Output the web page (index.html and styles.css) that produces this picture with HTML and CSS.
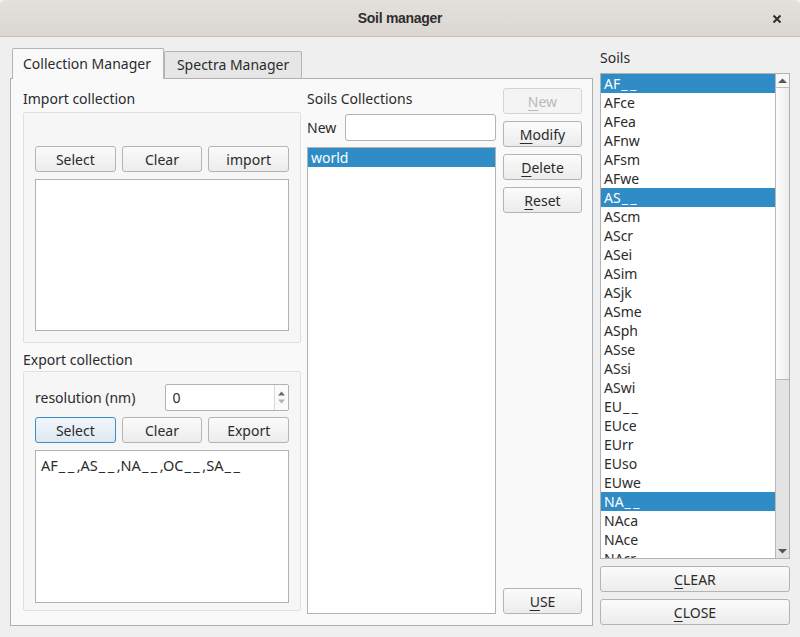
FILE: index.html
```html
<!DOCTYPE html>
<html>
<head>
<meta charset="utf-8">
<link rel="stylesheet" href="styles.css">
</head>
<body>
<div class="window">
  <div class="titlebar">
    <span class="title">Soil manager</span>
    <svg class="close" width="10" height="10" viewBox="0 0 10 10"><path d="M1.5 1.5 L8.5 8.5 M8.5 1.5 L1.5 8.5" stroke="#2e2e2e" stroke-width="2" fill="none"/></svg>
  </div>
  <div class="content">
    <div class="tabwidget">
      <div class="tabs">
        <div class="tab active">Collection Manager</div>
        <div class="tab">Spectra Manager</div>
      </div>
      <div class="pane">
        <div class="col-left">
          <div class="label">Import collection</div>
          <div class="group group-import">
            <div class="btnrow">
              <div class="btn">Select</div>
              <div class="btn">Clear</div>
              <div class="btn">import</div>
            </div>
            <div class="box box-import"></div>
          </div>
          <div class="label label-export">Export collection</div>
          <div class="group group-export">
            <div class="spinrow">
              <span class="spinlabel">resolution (nm)</span>
              <div class="spin">
                <span class="spinval">0</span>
                <div class="spinbtns">
                  <svg width="7" height="5" viewBox="0 0 7 5"><path d="M0 4.5 L3.5 0.5 L7 4.5 Z" fill="#6a6a6a"/></svg>
                  <svg width="7" height="5" viewBox="0 0 7 5"><path d="M0 0.5 L3.5 4.5 L7 0.5 Z" fill="#b0b0b0"/></svg>
                </div>
              </div>
            </div>
            <div class="btnrow">
              <div class="btn focus">Select</div>
              <div class="btn">Clear</div>
              <div class="btn">Export</div>
            </div>
            <div class="box box-export">AF<span class="us">__</span>,AS<span class="us">__</span>,NA<span class="us">__</span>,OC<span class="us">__</span>,SA<span class="us">__</span></div>
          </div>
        </div>
        <div class="col-mid">
          <div class="label">Soils Collections</div>
          <div class="newrow">
            <span class="newlabel">New</span>
            <div class="input"></div>
          </div>
          <div class="list list-coll">
            <div class="row sel">world</div>
          </div>
        </div>
        <div class="col-btns">
          <div class="btn disabled"><u>N</u>ew</div>
          <div class="btn"><u>M</u>odify</div>
          <div class="btn"><u>D</u>elete</div>
          <div class="btn"><u>R</u>eset</div>
          <div class="spacer"></div>
          <div class="btn"><u>U</u>SE</div>
        </div>
      </div>
    </div>
    <div class="col-right">
      <div class="label soils-label">Soils</div>
      <div class="soilslist">
        <div class="rows">
          <div class="row sel">AF<span class="us">__</span></div>
          <div class="row">AFce</div>
          <div class="row">AFea</div>
          <div class="row">AFnw</div>
          <div class="row">AFsm</div>
          <div class="row">AFwe</div>
          <div class="row sel">AS<span class="us">__</span></div>
          <div class="row">AScm</div>
          <div class="row">AScr</div>
          <div class="row">ASei</div>
          <div class="row">ASim</div>
          <div class="row">ASjk</div>
          <div class="row">ASme</div>
          <div class="row">ASph</div>
          <div class="row">ASse</div>
          <div class="row">ASsi</div>
          <div class="row">ASwi</div>
          <div class="row">EU<span class="us">__</span></div>
          <div class="row">EUce</div>
          <div class="row">EUrr</div>
          <div class="row">EUso</div>
          <div class="row">EUwe</div>
          <div class="row sel">NA<span class="us">__</span></div>
          <div class="row">NAca</div>
          <div class="row">NAce</div>
          <div class="row">NAcr</div>
        </div>
        <div class="scrollbar">
          <div class="sb-arrow up"><svg width="9" height="5" viewBox="0 0 9 5"><path d="M0 5 L4.5 0.5 L9 5 Z" fill="#555"/></svg></div>
          <div class="sb-thumb"></div>
          <div class="sb-track"></div>
          <div class="sb-arrow down"><svg width="9" height="5" viewBox="0 0 9 5"><path d="M0 0 L4.5 4.5 L9 0 Z" fill="#555"/></svg></div>
        </div>
      </div>
      <div class="btn wide"><u>C</u>LEAR</div>
      <div class="btn wide"><u>C</u>LOSE</div>
    </div>
  </div>
</div>
</body>
</html>
```
FILE: styles.css
```css
* { box-sizing: border-box; }
html, body { margin: 0; padding: 0; }
body {
  width: 800px;
  height: 637px;
  overflow: hidden;
  background: #efefef;
  font-family: "Noto Sans", "Open Sans", sans-serif;
  font-size: 14px;
  color: #2b2b2b;
}
.window {
  width: 800px;
  height: 637px;
  display: flex;
  flex-direction: column;
  background: #efefef;
}
.titlebar {
  height: 37px;
  flex: none;
  background: linear-gradient(#e3e0dc, #dbd8d3);
  border-bottom: 1px solid #c4beb6;
  border-radius: 6px 6px 0 0;
  display: flex;
  align-items: center;
  justify-content: center;
  position: relative;
}
.title {
  font-family: "Liberation Sans", sans-serif;
  font-weight: bold;
  font-size: 14px;
  color: #2e2e2e;
  letter-spacing: -0.3px;
}
.close {
  position: absolute;
  right: 18px;
  top: 14px;
}
.us {
  letter-spacing: 2.5px;
  margin-left: 1px;
}
.content {
  flex: 1;
  display: flex;
  padding: 11px 11px 0 10px;
  gap: 7px;
}
.tabwidget {
  width: 583px;
  display: flex;
  flex-direction: column;
}
.tabs {
  display: flex;
  align-items: flex-end;
  height: 30px;
  padding-left: 2px;
  position: relative;
  z-index: 1;
}
.tab {
  height: 27px;
  padding: 0 12px;
  line-height: 25px;
  background: #e6e6e6;
  border: 1px solid #b4b4b4;
  border-bottom: none;
  border-radius: 2px 2px 0 0;
  color: #2b2b2b;
}
.tab.active {
  height: 31px;
  line-height: 29px;
  background: #f9f9f9;
  padding: 0 12px 0 10px;
  margin-bottom: -1px;
}
.pane {
  width: 583px;
  height: 548px;
  background: #f9f9f9;
  border: 1px solid #b0b0b0;
  display: flex;
  padding: 9px 10px 11px 12px;
}
.label {
  height: 22px;
  line-height: 22px;
  color: #2b2b2b;
}
.col-left {
  width: 278px;
  display: flex;
  flex-direction: column;
}
.group {
  border: 1px solid #e0e0e0;
  border-radius: 2px;
  background: #f6f6f6;
  padding: 11px;
  display: flex;
  flex-direction: column;
}
.group-import {
  height: 231px;
  margin-top: 2px;
  justify-content: flex-end;
  padding-bottom: 11px;
}
.label-export {
  margin-top: 6px;
}
.group-export {
  height: 240px;
  margin-top: 0;
  padding-top: 12px;
}
.btnrow {
  display: flex;
  gap: 6px;
  height: 26px;
  flex: none;
}
.btnrow .btn { flex: 1; }
.btn {
  height: 26px;
  border: 1px solid #b4b4b4;
  border-radius: 3px;
  background: linear-gradient(#fbfbfb, #ececec);
  display: flex;
  align-items: center;
  justify-content: center;
  color: #2b2b2b;
  flex: none;
}
.btn u {
  text-decoration-thickness: 1px;
  text-underline-offset: 3px;
}
.btn.focus {
  border-color: #3d8cc8;
  background: linear-gradient(#f1f6fb, #dde8f2);
}
.btn.disabled {
  color: #b9b9b9;
  border-color: #d4d4d4;
  background: #f4f4f4;
}
.box {
  background: #fff;
  border: 1px solid #b2b2b2;
  flex: none;
}
.box-import {
  margin-top: 7px;
  height: 152px;
}
.spinrow {
  display: flex;
  align-items: center;
  height: 27px;
  flex: none;
}
.spinlabel {
  width: 131px;
}
.spin {
  width: 124px;
  height: 27px;
  background: #fff;
  border: 1px solid #b2b2b2;
  border-radius: 2px;
  display: flex;
  align-items: center;
  justify-content: space-between;
  padding-left: 6px;
}
.spinbtns {
  width: 14px;
  height: 100%;
  border-left: 1px solid #d8d8d8;
  display: flex;
  flex-direction: column;
  align-items: center;
  justify-content: center;
  gap: 3px;
  background: #fafafa;
}
.group-export .btnrow { margin-top: 6px; }
.box-export {
  margin-top: 7px;
  height: 153px;
  padding: 3px 5px;
  line-height: 22px;
  font-size: 14.5px;
}
.col-mid {
  width: 189px;
  margin-left: 6px;
  display: flex;
  flex-direction: column;
}
.newrow {
  display: flex;
  align-items: center;
  height: 27px;
  margin-top: 4px;
}
.newlabel { width: 38px; }
.input {
  flex: 1;
  height: 27px;
  background: #fff;
  border: 1px solid #b2b2b2;
  border-radius: 3px;
}
.list-coll {
  margin-top: 6px;
  flex: 1;
  background: #fff;
  border: 1px solid #b2b2b2;
}
.row {
  height: 19px;
  line-height: 19px;
  padding-left: 3px;
  white-space: nowrap;
}
.row.sel {
  background: #308cc6;
  color: #fff;
}
.col-btns {
  width: 79px;
  margin-left: 7px;
  display: flex;
  flex-direction: column;
  gap: 7px;
}
.col-btns .btn { width: 79px; }
.spacer { flex: 1; }
.col-right {
  width: 190px;
  display: flex;
  flex-direction: column;
}
.soils-label {
  height: 20px;
  line-height: 20px;
}
.soilslist {
  margin-top: 5px;
  height: 486px;
  border: 1px solid #b2b2b2;
  background: #fff;
  display: flex;
  overflow: hidden;
}
.rows {
  flex: 1;
  overflow: hidden;
}
.scrollbar {
  width: 14px;
  border-left: 1px solid #b8b8b8;
  display: flex;
  flex-direction: column;
  background: #e3e3e3;
}
.sb-arrow {
  height: 14px;
  flex: none;
  display: flex;
  align-items: center;
  justify-content: center;
  background: #f7f7f7;
}
.sb-arrow.up { border-bottom: 1px solid #c0c0c0; }
.sb-arrow.down { background: #e3e3e3; }
.sb-thumb {
  height: 292px;
  flex: none;
  background: linear-gradient(90deg, #fdfdfd, #ececec);
  border-bottom: 1px solid #b8b8b8;
}
.sb-track {
  flex: 1;
  background: #e3e3e3;
}
.btn.wide {
  width: 190px;
  margin-top: 7px;
}
```
